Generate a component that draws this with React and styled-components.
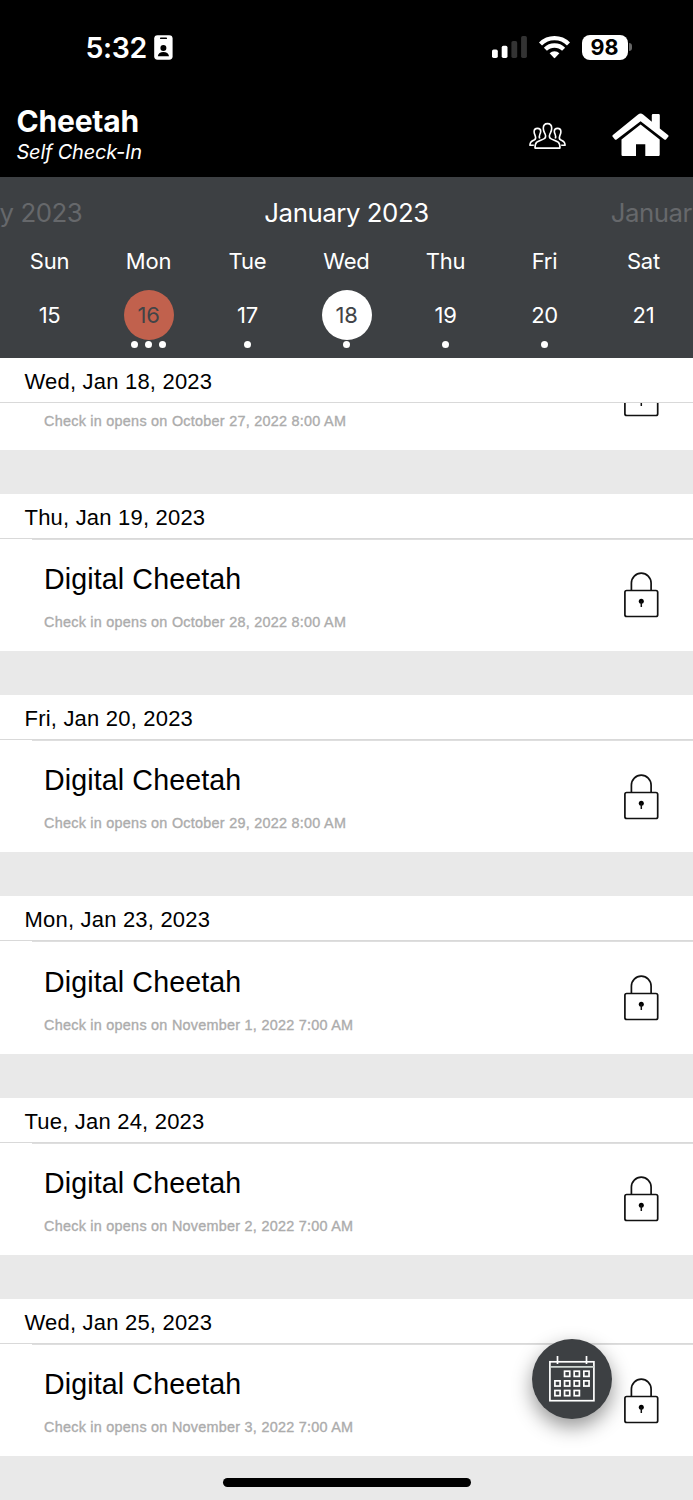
import React from "react";
import styled, { createGlobalStyle } from "styled-components";

const GlobalStyle = createGlobalStyle`
  * { box-sizing: border-box; }
  body { margin: 0; background: #e9e9e9; }
`;

const SLATE = "#3d4043";
const SYSTEM_FONT = 'Inter, "Liberation Sans", sans-serif';
const LIST_FONT = '"Liberation Sans", Arial, sans-serif';

const Screen = styled.div`
  position: relative;
  display: flex;
  flex-direction: column;
  width: 693px;
  height: 1500px;
  overflow: hidden;
  background: #e9e9e9;
  font-family: ${SYSTEM_FONT};
`;

const StatusBar = styled.header`
  display: flex;
  justify-content: space-between;
  align-items: center;
  height: 94px;
  padding: 0 61px 0 85.5px;
  background: #000;
  color: #fff;
`;

const StatusGroup = styled.div`
  display: flex;
  align-items: center;
  gap: ${(p) => p.$gap}px;
`;

const Clock = styled.span`
  font-size: 28.5px;
  font-weight: 600;
  line-height: 35px;
  letter-spacing: -0.4px;
`;

const AppBar = styled.div`
  display: flex;
  justify-content: space-between;
  height: 83px;
  padding: 10px 24px 0 16.5px;
  background: #000;
  color: #fff;
`;

const AppTitle = styled.h1`
  margin: 0;
  font-size: 30px;
  font-weight: 700;
  line-height: 34px;
  letter-spacing: -0.2px;
`;

const AppSubtitle = styled.div`
  font-size: 20px;
  font-style: italic;
  line-height: 28px;
  letter-spacing: -0.22px;
`;

const AppActions = styled.div`
  display: flex;
  align-items: flex-start;
  gap: 46px;
  padding-top: 9px;
`;

const Calendar = styled.section`
  height: 181px;
  flex: none;
  background: ${SLATE};
  color: #fff;
`;

const MonthStrip = styled.div`
  display: flex;
  justify-content: center;
  gap: 182px;
  height: 62px;
  padding-top: 19px;
  overflow: hidden;
`;

const Month = styled.span`
  flex: none;
  font-size: 25.8px;
  line-height: 33px;
  letter-spacing: -0.45px;
  white-space: nowrap;
  color: ${(p) => (p.$dim ? "#66686b" : "#fff")};
`;

const Week = styled.div`
  display: grid;
  grid-template-columns: repeat(7, 1fr);
`;

const Day = styled.div`
  display: flex;
  flex-direction: column;
  align-items: center;
`;

const DayName = styled.span`
  height: 51px;
  font-size: 22px;
  line-height: 45px;
  letter-spacing: -0.2px;
`;

const dayFill = { today: "#c1614d", selected: "#fff" };

const DayNumber = styled.span`
  width: 50px;
  height: 50px;
  border-radius: 50%;
  background: ${(p) => dayFill[p.$state] || "transparent"};
  color: ${(p) => (p.$state ? "#424447" : "#fff")};
  font-size: 22px;
  line-height: 50px;
  letter-spacing: -0.3px;
  text-align: center;
`;

const Dots = styled.div`
  display: flex;
  gap: 7px;
  margin-top: 1px;
`;

const Dot = styled.i`
  width: 7px;
  height: 7px;
  border-radius: 50%;
  background: #fff;
`;

const Agenda = styled.main`
  display: flex;
  flex-direction: column;
  gap: 44px;
  font-family: ${LIST_FONT};
`;

const Section = styled.section`
  background: #fff;
`;

const DateHeading = styled.h2`
  height: 45px;
  margin: 0;
  padding: 2px 24.5px 0;
  border-bottom: 1px solid #d9d9d9;
  color: #000;
  font-size: 22px;
  font-weight: 400;
  line-height: 44px;
  letter-spacing: 0.2px;
`;

const Entry = styled.article`
  display: flex;
  justify-content: space-between;
  align-items: flex-end;
  height: ${(p) => (p.$scrolled ? 46.7 : 112.3)}px;
  padding: 0 34px 0 44px;
  overflow: hidden;
  background: ${(p) =>
    p.$scrolled ? "#fff" : "linear-gradient(#dedede, #dedede) 32px 0 / 100% 1px no-repeat #fff"};
`;

const EntryText = styled.div`
  padding-bottom: 20px;
`;

const EntryTitle = styled.h3`
  margin: 0 0 16.9px;
  color: #000;
  font-size: 28.6px;
  font-weight: 400;
  line-height: 34px;
  letter-spacing: 0.12px;
`;

const EntryNote = styled.p`
  margin: 0;
  color: #acacac;
  font-size: 14.4px;
  line-height: 18px;
  letter-spacing: 0.26px;
  -webkit-text-stroke: 0.35px #acacac;
`;

const LockSlot = styled.div`
  display: flex;
  padding-bottom: 32.5px;
`;

const Fab = styled.button`
  position: absolute;
  left: 531.5px;
  top: 1338.7px;
  display: flex;
  align-items: center;
  justify-content: center;
  width: 80.5px;
  height: 80.5px;
  padding: 0;
  border: 0;
  border-radius: 50%;
  background: ${SLATE};
  box-shadow: 0 8px 20px rgba(0, 0, 0, 0.42);
`;

const HomeArea = styled.footer`
  display: flex;
  flex: 1;
  justify-content: center;
  padding-top: 22.3px;
`;

const HomeIndicator = styled.div`
  width: 248px;
  height: 8.5px;
  border-radius: 5px;
  background: #000;
`;

const BadgeIcon = () => (
  <svg width="19" height="25" viewBox="0 0 19 25">
    <rect x="0.2" y="0.2" width="18.4" height="24.5" rx="3.4" fill="#fff" />
    <rect x="6" y="2.6" width="7" height="1.5" rx=".7" fill="#000" />
    <circle cx="9.4" cy="13" r="3" fill="#000" />
    <path d="M3.8 21.2c.2-2.5 2.6-4.1 5.6-4.1s5.4 1.6 5.6 4.1z" fill="#000" />
  </svg>
);

const SignalIcon = () => (
  <svg width="35" height="22" viewBox="0 0 35 22">
    <rect x="0" y="13.5" width="5.8" height="8.5" rx="1.7" fill="#fff" />
    <rect x="9.7" y="9.8" width="5.8" height="12.2" rx="1.7" fill="#fff" />
    <rect x="19.4" y="5" width="5.8" height="17" rx="1.7" fill="#333" />
    <rect x="29.1" y="0" width="5.8" height="22" rx="1.7" fill="#333" />
  </svg>
);

const WifiIcon = () => (
  <svg width="31" height="23" viewBox="0 0 31 23">
    <g fill="none" stroke="#fff" strokeWidth="4.3">
      <path d="M1.5 8a19.8 19.8 0 0 1 28 0" />
      <path d="M6.4 13.3a12.800 12.800 0 0 1 18.200 0" />
    </g>
    <path d="M10.600 17.300a7 7 0 0 1 9.800 0l-4.200 4.500q-.7.700-1.400 0z" fill="#fff" />
  </svg>
);

const Battery = styled.div`
  display: flex;
  align-items: center;
  gap: 1.5px;
`;

const BatteryBody = styled.span`
  width: 46px;
  height: 25px;
  border-radius: 8px;
  background: #fff;
  color: #000;
  font-size: 21.5px;
  font-weight: 700;
  line-height: 25px;
  text-align: center;
`;

const BatteryCap = styled.span`
  width: 3px;
  height: 8px;
  border-radius: 0 4px 4px 0;
  background: #666;
`;

const PeopleIcon = () => (
  <svg width="37" height="36" viewBox="0 0 37 36" fill="none" stroke="#fff" strokeWidth="1.6" strokeLinejoin="round">
    <path d="M18.5 10.6C15.5 10.6 14.3 12.7 14.3 15.3C14.3 18 15.3 19.3 16.1 21C17.1 23.3 16.6 25 14.8 25.9C12.5 27 9.5 27.7 7.8 29.2C6.3 30.5 6 32.5 6 35.1H31C31 32.5 30.7 30.5 29.2 29.2C27.5 27.7 24.5 27 22.2 25.9C20.4 25 19.9 23.3 20.9 21C21.7 19.3 22.7 18 22.7 15.3C22.7 12.7 21.5 10.6 18.5 10.6Z" />
    <path d="M10.7 25.5C10.1 24 10.2 22.8 10.8 21.5C11.4 20.3 11.7 19.5 11.7 18.3C11.7 16.3 10.4 15.4 8.5 15.4C6.4 15.4 5.1 16.6 5.1 18.8C5.1 20.4 5.7 21.5 6.2 22.7C6.9 24.4 6.8 26 5.5 26.8C4.2 27.5 2.7 28 1.8 29.2C1.2 30 1 31 .9 32.2H4.8" />
    <path d="M26.3 25.5C26.9 24 26.8 22.8 26.2 21.5C25.6 20.3 25.3 19.5 25.3 18.3C25.3 16.3 26.6 15.4 28.5 15.4C30.6 15.4 31.9 16.6 31.9 18.8C31.9 20.4 31.3 21.5 30.8 22.7C30.1 24.4 30.2 26 31.5 26.8C32.8 27.5 34.3 28 35.2 29.2C35.8 30 36 31 36.1 32.2H32.2" />
  </svg>
);

const HouseIcon = () => (
  <svg width="57" height="44" viewBox="0 0 57 44" fill="#fff">
    <path d="M26.1 1.6q2.5-2 5 0L39.8 8.8V2.2q0-1.2 1.2-1.2h5.6q1.2 0 1.2 1.2V15.5l8.2 6.4q1 .9.2 1.9l-2 2.500q-.9 1-1.900.2L28.600 8.200 4.600 26.500q-1 .8-1.900-.2l-2-2.500q-.8-1 .2-1.900z" />
    <path d="M28.6 11.4 47.7 26.5V41.8q0 1.2-1.2 1.2H33.3V31.2H24V43H10.7q-1.2 0-1.2-1.2V26.5z" />
  </svg>
);

const LockIcon = () => (
  <svg width="35" height="46" viewBox="0 0 35 46" fill="none" stroke="#111" strokeWidth="1.7">
    <path d="M7.4 18.5V11a9.85 9.85 0 0 1 19.7 0v7.5" />
    <rect x=".9" y="18.5" width="32.8" height="26" rx="1.8" />
    <circle cx="17.3" cy="29.2" r="2.5" fill="#000" stroke="none" />
    <path d="M17.3 29v6" strokeWidth="1.5" />
  </svg>
);

const GRID_CELLS = [
  [1, 0], [2, 0], [3, 0],
  [0, 1], [1, 1], [2, 1], [3, 1],
  [0, 2], [1, 2], [2, 2],
];

const CalendarIcon = () => (
  <svg width="46" height="46" viewBox="0 0 46 46" fill="none" stroke="#fff" strokeWidth="1.7">
    <rect x=".9" y="5.8" width="44" height="38.9" />
    <path d="M1 10.8h44" stroke="#cfd6d2" />
    <path d="M8.5 0v8M37.5 0v8" />
    {GRID_CELLS.map(([col, row]) => (
      <rect key={`${col}-${row}`} x={5.9 + col * 9.65} y={15.2 + row * 9.65} width="5.2" height="5.2" />
    ))}
  </svg>
);

const WEEK = [
  { name: "Sun", number: 15, events: 0 },
  { name: "Mon", number: 16, events: 3, state: "today" },
  { name: "Tue", number: 17, events: 1 },
  { name: "Wed", number: 18, events: 1, state: "selected" },
  { name: "Thu", number: 19, events: 1 },
  { name: "Fri", number: 20, events: 1 },
  { name: "Sat", number: 21, events: 0 },
];

const SECTIONS = [
  { date: "Wed, Jan 18, 2023", opens: "October 27, 2022 8:00 AM", scrolled: true },
  { date: "Thu, Jan 19, 2023", opens: "October 28, 2022 8:00 AM" },
  { date: "Fri, Jan 20, 2023", opens: "October 29, 2022 8:00 AM" },
  { date: "Mon, Jan 23, 2023", opens: "November 1, 2022 7:00 AM" },
  { date: "Tue, Jan 24, 2023", opens: "November 2, 2022 7:00 AM" },
  { date: "Wed, Jan 25, 2023", opens: "November 3, 2022 7:00 AM" },
];

export default function App() {
  return (
    <Screen>
      <GlobalStyle />
      <StatusBar>
        <StatusGroup $gap={7}>
          <Clock>5:32</Clock>
          <BadgeIcon />
        </StatusGroup>
        <StatusGroup $gap={12}>
          <SignalIcon />
          <WifiIcon />
          <Battery>
            <BatteryBody>98</BatteryBody>
            <BatteryCap />
          </Battery>
        </StatusGroup>
      </StatusBar>
      <AppBar>
        <div>
          <AppTitle>Cheetah</AppTitle>
          <AppSubtitle>Self Check-In</AppSubtitle>
        </div>
        <AppActions>
          <PeopleIcon />
          <HouseIcon />
        </AppActions>
      </AppBar>
      <Calendar>
        <MonthStrip>
          <Month $dim>January 2023</Month>
          <Month>January 2023</Month>
          <Month $dim>January 2023</Month>
        </MonthStrip>
        <Week>
          {WEEK.map((day) => (
            <Day key={day.name}>
              <DayName>{day.name}</DayName>
              <DayNumber $state={day.state}>{day.number}</DayNumber>
              <Dots>
                {Array.from({ length: day.events }, (_, i) => (
                  <Dot key={i} />
                ))}
              </Dots>
            </Day>
          ))}
        </Week>
      </Calendar>
      <Agenda>
        {SECTIONS.map((section) => (
          <Section key={section.date}>
            <DateHeading>{section.date}</DateHeading>
            <Entry $scrolled={section.scrolled}>
              <EntryText>
                {!section.scrolled && <EntryTitle>Digital Cheetah</EntryTitle>}
                <EntryNote>Check in opens on {section.opens}</EntryNote>
              </EntryText>
              <LockSlot>
                <LockIcon />
              </LockSlot>
            </Entry>
          </Section>
        ))}
      </Agenda>
      <HomeArea>
        <HomeIndicator />
      </HomeArea>
      <Fab aria-label="Open calendar">
        <CalendarIcon />
      </Fab>
    </Screen>
  );
}
